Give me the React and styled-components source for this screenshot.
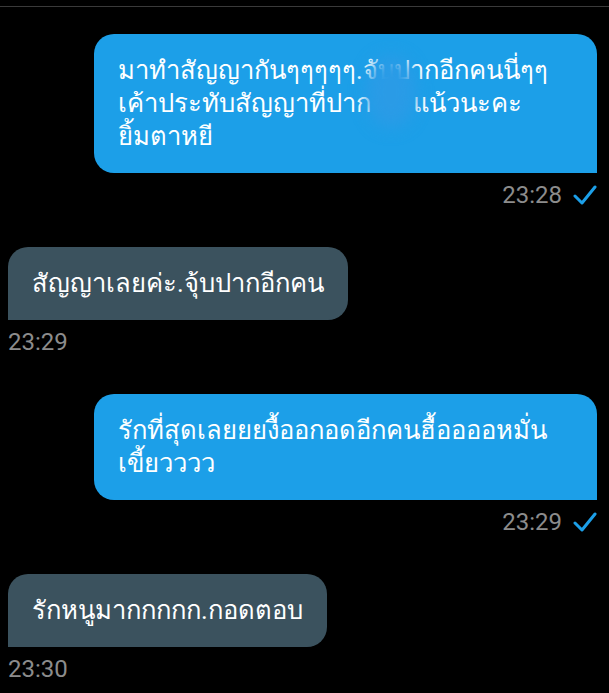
import React from 'react'
import styled, { createGlobalStyle } from 'styled-components'

const GlobalStyle = createGlobalStyle`
  html, body {
    margin: 0;
    padding: 0;
    background: #000;
  }
  body {
    font-family: Roboto, "Noto Sans", "DejaVu Sans", sans-serif;
  }
`

const Screen = styled.div`
  width: 609px;
  height: 693px;
  overflow: hidden;
  background: #000;
  padding-top: 6px;
  box-sizing: border-box;
`

const TopRule = styled.div`
  height: 1px;
  background: #3a3a3a;
`

const Thread = styled.div`
  display: flex;
  flex-direction: column;
  padding: 27px 12px 0 8px;
  gap: 37px;
`

const Message = styled.div`
  display: flex;
  flex-direction: column;
  align-items: ${p => (p.out ? 'flex-end' : 'flex-start')};
`

const Bubble = styled.div`
  position: relative;
  box-sizing: border-box;
  width: ${p => (p.wide ? '503px' : 'auto')};
  padding: 20px 24px;
  font-size: 25.6px;
  line-height: 33px;
  color: #fff;
  background: ${p => (p.out ? '#1c9fe8' : '#3b525e')};
  border-radius: ${p => (p.out ? '20px 20px 0 20px' : '20px 20px 20px 0')};
`

const Line = styled.span`
  display: block;
  white-space: nowrap;
`

const Hidden = styled.span`
  display: inline-block;
  width: ${p => p.w}px;
`

const Blur = styled.div`
  position: absolute;
  left: 272px;
  top: 22px;
  width: 50px;
  height: 72px;
  border-radius: 50%;
  background: #2a9be6;
  filter: blur(8px);
`

const Meta = styled.div`
  display: flex;
  align-items: center;
  gap: 11px;
  margin-top: 7px;
  height: 30px;
  font-size: 24px;
  color: #8c8c8c;
`

const Check = () => (
  <svg width="24" height="22" viewBox="0 0 24 22">
    <path d="M2 12 L9 19 L22 3" fill="none" stroke="#1c9fe8" strokeWidth="3" strokeLinecap="round" strokeLinejoin="round" />
  </svg>
)

export default function App() {
  return (
    <Screen>
      <GlobalStyle />
      <TopRule />
      <Thread>
        <Message out>
          <Bubble out wide>
            <Line>มาทำสัญญากันๆๆๆๆๆ.จับปากอีกคนนี่ๆๆ</Line>
            <Line>
              เค้าประทับสัญญาที่ปาก<Hidden w={42} />แน้วนะคะ
            </Line>
            <Line>ยิ้มตาหยี</Line>
            <Blur />
          </Bubble>
          <Meta>
            23:28
            <Check />
          </Meta>
        </Message>

        <Message>
          <Bubble>สัญญาเลยค่ะ.จุ้บปากอีกคน</Bubble>
          <Meta>23:29</Meta>
        </Message>

        <Message out>
          <Bubble out wide>
            <Line>รักที่สุดเลยยยงื้ออกอดอีกคนฮื้ออออหมั่น</Line>
            <Line>เขี้ยวววว</Line>
          </Bubble>
          <Meta>
            23:29
            <Check />
          </Meta>
        </Message>

        <Message>
          <Bubble>รักหนูมากกกกก.กอดตอบ</Bubble>
          <Meta>23:30</Meta>
        </Message>
      </Thread>
    </Screen>
  )
}
